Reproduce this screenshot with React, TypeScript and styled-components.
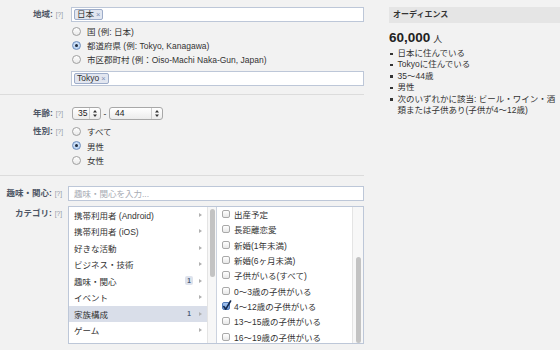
import React from "react";
import styled, { createGlobalStyle } from "styled-components";

const GlobalStyle = createGlobalStyle`
  html, body { margin: 0; padding: 0; background: #f2f2f2; }
  body {
    font-family: "Liberation Sans", "Noto Sans CJK JP", sans-serif;
    font-size: 8.5px;
    color: #333;
  }
  * { box-sizing: border-box; }
`;

const Page = styled.div`
  display: flex;
  width: 560px;
  height: 350px;
  overflow: hidden;
  background: #f2f2f2;
`;

const Main = styled.div`
  width: 364px;
  display: flex;
  flex-direction: column;
`;

const Section = styled.section<{ $pt: number; $pb: number; $divider?: boolean }>`
  display: flex;
  flex-direction: column;
  padding: ${(p) => p.$pt}px 0 ${(p) => p.$pb}px;
  border-bottom: ${(p) => (p.$divider ? "1px solid #dcdcdc" : "none")};
`;

const Field = styled.div<{ $labelW: number; $gap: number; $mt?: number }>`
  display: grid;
  grid-template-columns: ${(p) => p.$labelW}px 1fr;
  column-gap: ${(p) => p.$gap}px;
  margin-top: ${(p) => p.$mt ?? 0}px;
  align-items: start;
`;

const Label = styled.div<{ $h: number }>`
  text-align: right;
  font-weight: bold;
  color: #4e5665;
  line-height: ${(p) => p.$h}px;
  white-space: nowrap;
`;

const Help = styled.span`
  font-weight: normal;
  color: #9197a3;
  font-size: 6.5px;
  margin-left: 3px;
`;

const Controls = styled.div`
  display: flex;
  flex-direction: column;
`;

const TokenInput = styled.div<{ $mt?: number }>`
  height: 15px;
  margin-top: ${(p) => p.$mt ?? 0}px;
  border: 1px solid #bdc7d8;
  background: #fff;
  padding: 0 2px 0 2px;
  display: flex;
  align-items: center;
`;

const Token = styled.span`
  display: inline-flex;
  align-items: center;
  gap: 2px;
  height: 11px;
  padding: 0 2px 0 2px;
  border: 1px solid #9dacc9;
  border-radius: 2px;
  background: #e2e6f0;
  color: #333;
  line-height: 9px;
`;

const TokenClose = styled.span`
  font-size: 7.5px;
  color: #7d8fb3;
`;

const RadioList = styled.div<{ $mt: number; $row: number }>`
  display: flex;
  flex-direction: column;
  margin-top: ${(p) => p.$mt}px;
  & > * { height: ${(p) => p.$row}px; }
`;

const OptionRow = styled.label`
  display: flex;
  align-items: center;
  gap: 6px;
  padding-left: 1px;
  color: #333;
  white-space: nowrap;
`;

const RadioCircle = styled.span<{ $on?: boolean }>`
  width: 9px;
  height: 9px;
  border-radius: 50%;
  border: 1px solid ${(p) => (p.$on ? "#6f8fbf" : "#a0a0a0")};
  background: ${(p) =>
    p.$on
      ? "radial-gradient(circle at 50% 40%, #dbe9fa 0%, #a9c9ef 100%)"
      : "linear-gradient(#ffffff, #e9e9e9)"};
  display: flex;
  align-items: center;
  justify-content: center;
  flex: none;
  &::after {
    content: "";
    width: 3px;
    height: 3px;
    border-radius: 50%;
    background: ${(p) => (p.$on ? "#1e2b40" : "transparent")};
  }
`;

const Radio = ({ on, children }: { on?: boolean; children: React.ReactNode }) => (
  <OptionRow>
    <RadioCircle $on={on} />
    <span>{children}</span>
  </OptionRow>
);

const AgeRow = styled.div`
  display: flex;
  align-items: center;
  height: 13px;
  padding-left: 1px;
`;

const SelectBox = styled.div<{ $w: number }>`
  width: ${(p) => p.$w}px;
  height: 13px;
  border: 1px solid #a8a8a8;
  border-radius: 3px;
  background: linear-gradient(#ffffff, #ececec);
  display: flex;
  align-items: center;
  color: #222;
`;

const SelectValue = styled.span`
  flex: 1;
  padding-left: 5px;
  line-height: 11px;
`;

const SelectArrows = styled.span`
  width: 11px;
  height: 100%;
  border-left: 1px solid #cfcfcf;
  display: flex;
  align-items: center;
  justify-content: center;
`;

const Dash = styled.span`
  width: 8px;
  text-align: center;
  color: #333;
`;

const Select = ({ w, value }: { w: number; value: string }) => (
  <SelectBox $w={w}>
    <SelectValue>{value}</SelectValue>
    <SelectArrows>
      <svg width="4" height="7" viewBox="0 0 4 7">
        <path d="M2 0 L4 2.6 L0 2.6 Z M2 7 L4 4.4 L0 4.4 Z" fill="#333" />
      </svg>
    </SelectArrows>
  </SelectBox>
);

const TextInput = styled.div`
  height: 15px;
  border: 1px solid #bdc7d8;
  background: #fff;
  padding-left: 5px;
  display: flex;
  align-items: center;
  color: #a7abb3;
`;

const ListBox = styled.div`
  margin-top: 5px;
  height: 138px;
  border: 1px solid #bdc7d8;
  background: #fff;
  display: flex;
  overflow: hidden;
`;

const LeftPane = styled.div`
  width: 148px;
  display: flex;
  border-right: 1px solid #ccd3df;
`;

const RightPane = styled.div`
  flex: 1;
  display: flex;
  min-width: 0;
`;

const ItemList = styled.div<{ $shift?: number }>`
  flex: 1;
  min-width: 0;
  overflow: hidden;
  display: flex;
  flex-direction: column;
  padding-top: ${(p) => p.$shift ?? 0}px;
`;

const CatItem = styled.div<{ $active?: boolean }>`
  flex: none;
  height: 16.5px;
  display: flex;
  align-items: center;
  padding: 0 5px 0 5px;
  background: ${(p) => (p.$active ? "#d9dee9" : "transparent")};
  color: #333;
  white-space: nowrap;
`;

const CatName = styled.span`
  flex: 1;
`;

const Badge = styled.span<{ $active?: boolean }>`
  height: 9px;
  min-width: 8px;
  padding: 0 2px;
  margin-right: 6px;
  border-radius: 2px;
  background: ${(p) => (p.$active ? "transparent" : "#dde2ec")};
  color: #4b5a78;
  font-size: 6.5px;
  font-weight: bold;
  line-height: 9px;
  text-align: center;
`;

const Chevron = styled.span`
  width: 0;
  height: 0;
  border-left: 3px solid #b0b0b0;
  border-top: 2.5px solid transparent;
  border-bottom: 2.5px solid transparent;
`;

const Track = styled.div<{ $w: number; $thumbTop: number; $thumbH: number; $thumbW: number }>`
  width: ${(p) => p.$w}px;
  flex: none;
  background: #f7f7f7;
  border-left: 1px solid #e4e4e4;
  display: flex;
  flex-direction: column;
  align-items: center;
  &::before {
    content: "";
    display: block;
    margin-top: ${(p) => p.$thumbTop}px;
    width: ${(p) => p.$thumbW}px;
    height: ${(p) => p.$thumbH}px;
    border-radius: 3px;
    background: #c3c3c3;
  }
`;

const CheckItem = styled.div`
  flex: none;
  height: 15.3px;
  display: flex;
  align-items: center;
  gap: 4px;
  padding-left: 5px;
  color: #333;
  white-space: nowrap;
`;

const CheckBoxFrame = styled.span<{ $on?: boolean }>`
  width: 8px;
  height: 8px;
  flex: none;
  border-radius: 2px;
  border: 1px solid ${(p) => (p.$on ? "#4f79b8" : "#a9a9a9")};
  background: ${(p) => (p.$on ? "linear-gradient(#a6c6f0, #6f9ddd)" : "linear-gradient(#ffffff, #e8e8e8)")};
  position: relative;
  & > svg {
    position: absolute;
    left: -1px;
    top: -3px;
    overflow: visible;
  }
`;

const Check = ({ on, children }: { on?: boolean; children: React.ReactNode }) => (
  <CheckItem>
    <CheckBoxFrame $on={on}>
      {on && (
        <svg width="10" height="11" viewBox="0 0 10 11">
          <path d="M1.8 6.6 L3.8 9.2 L8.6 1" fill="none" stroke="#13294d" strokeWidth="1.6" strokeLinecap="round" strokeLinejoin="round" />
        </svg>
      )}
    </CheckBoxFrame>
    <span>{children}</span>
  </CheckItem>
);

const Side = styled.aside`
  width: 171px;
  margin-left: 25px;
  padding-top: 7px;
  display: flex;
  flex-direction: column;
`;

const SideHeader = styled.div`
  height: 16px;
  line-height: 16px;
  padding-left: 4px;
  background: #e5e5e5;
  font-weight: bold;
  font-size: 8px;
  color: #333;
`;

const Count = styled.div`
  margin-top: 5px;
  display: flex;
  align-items: baseline;
  gap: 3px;
  height: 20px;
  line-height: 20px;
`;

const CountNum = styled.span`
  font-size: 13.5px;
  font-weight: bold;
  color: #222;
`;

const CountUnit = styled.span`
  font-size: 9px;
  color: #333;
`;

const Bullets = styled.ul`
  list-style: none;
  margin: 0;
  padding: 0;
  display: flex;
  flex-direction: column;
`;

const Bullet = styled.li`
  display: flex;
  gap: 5px;
  line-height: 11.4px;
  color: #333;
  &::before {
    content: "";
    flex: none;
    width: 2.5px;
    height: 2.5px;
    margin: 4.5px 0 0 1px;
    background: #333;
  }
`;

const categories: { name: string; badge?: boolean; active?: boolean }[] = [
  { name: "携帯利用者 (Android)" },
  { name: "携帯利用者 (iOS)" },
  { name: "好きな活動" },
  { name: "ビジネス・技術" },
  { name: "趣味・関心", badge: true },
  { name: "イベント" },
  { name: "家族構成", badge: true, active: true },
  { name: "ゲーム" },
];

const options: { name: string; on?: boolean }[] = [
  { name: "出産予定" },
  { name: "長距離恋愛" },
  { name: "新婚(1年未満)" },
  { name: "新婚(6ヶ月未満)" },
  { name: "子供がいる(すべて)" },
  { name: "0〜3歳の子供がいる" },
  { name: "4〜12歳の子供がいる", on: true },
  { name: "13〜15歳の子供がいる" },
  { name: "16〜19歳の子供がいる" },
];

export default function App() {
  return (
    <>
      <GlobalStyle />
      <Page>
        <Main>
          <Section $pt={7} $pb={8} $divider>
            <Field $labelW={63} $gap={8}>
              <Label $h={15}>
                地域:<Help>[?]</Help>
              </Label>
              <Controls>
                <TokenInput>
                  <Token>
                    日本<TokenClose>×</TokenClose>
                  </Token>
                </TokenInput>
                <RadioList $mt={2} $row={14}>
                  <Radio>国 (例: 日本)</Radio>
                  <Radio on>都道府県 (例: Tokyo, Kanagawa)</Radio>
                  <Radio>市区郡町村 (例：Oiso-Machi Naka-Gun, Japan)</Radio>
                </RadioList>
                <TokenInput $mt={5}>
                  <Token>
                    Tokyo<TokenClose>×</TokenClose>
                  </Token>
                </TokenInput>
              </Controls>
            </Field>
          </Section>
          <Section $pt={12} $pb={7} $divider>
            <Field $labelW={63} $gap={8}>
              <Label $h={13}>
                年齢:<Help>[?]</Help>
              </Label>
              <AgeRow>
                <Select w={29} value="35" />
                <Dash>-</Dash>
                <Select w={54} value="44" />
              </AgeRow>
            </Field>
            <Field $labelW={63} $gap={8} $mt={4}>
              <Label $h={14.5}>
                性別:<Help>[?]</Help>
              </Label>
              <RadioList $mt={0} $row={14.5}>
                <Radio>すべて</Radio>
                <Radio on>男性</Radio>
                <Radio>女性</Radio>
              </RadioList>
            </Field>
          </Section>
          <Section $pt={10} $pb={0}>
            <Field $labelW={62} $gap={6}>
              <Label $h={15}>
                趣味・関心:<Help>[?]</Help>
              </Label>
              <TextInput>趣味・関心を入力...</TextInput>
            </Field>
            <Field $labelW={62} $gap={6}>
              <Label $h={24}>
                カテゴリ:<Help>[?]</Help>
              </Label>
              <ListBox>
                <LeftPane>
                  <ItemList $shift={-1}>
                    {categories.map((c) => (
                      <CatItem key={c.name} $active={c.active}>
                        <CatName>{c.name}</CatName>
                        {c.badge && <Badge $active={c.active}>1</Badge>}
                        <Chevron />
                      </CatItem>
                    ))}
                  </ItemList>
                  <Track $w={9} $thumbTop={2} $thumbH={68} $thumbW={5} />
                </LeftPane>
                <RightPane>
                  <ItemList>
                    {options.map((o) => (
                      <Check key={o.name} on={o.on}>
                        {o.name}
                      </Check>
                    ))}
                  </ItemList>
                  <Track $w={11} $thumbTop={50} $thumbH={86} $thumbW={5} />
                </RightPane>
              </ListBox>
            </Field>
          </Section>
        </Main>
        <Side>
          <SideHeader>オーディエンス</SideHeader>
          <Count>
            <CountNum>60,000</CountNum>
            <CountUnit>人</CountUnit>
          </Count>
          <Bullets>
            <Bullet>日本に住んでいる</Bullet>
            <Bullet>Tokyoに住んでいる</Bullet>
            <Bullet>35〜44歳</Bullet>
            <Bullet>男性</Bullet>
            <Bullet>
              <span>
                次のいずれかに該当: ビール・ワイン・酒
                <br />
                類または子供あり(子供が4〜12歳)
              </span>
            </Bullet>
          </Bullets>
        </Side>
      </Page>
    </>
  );
}
